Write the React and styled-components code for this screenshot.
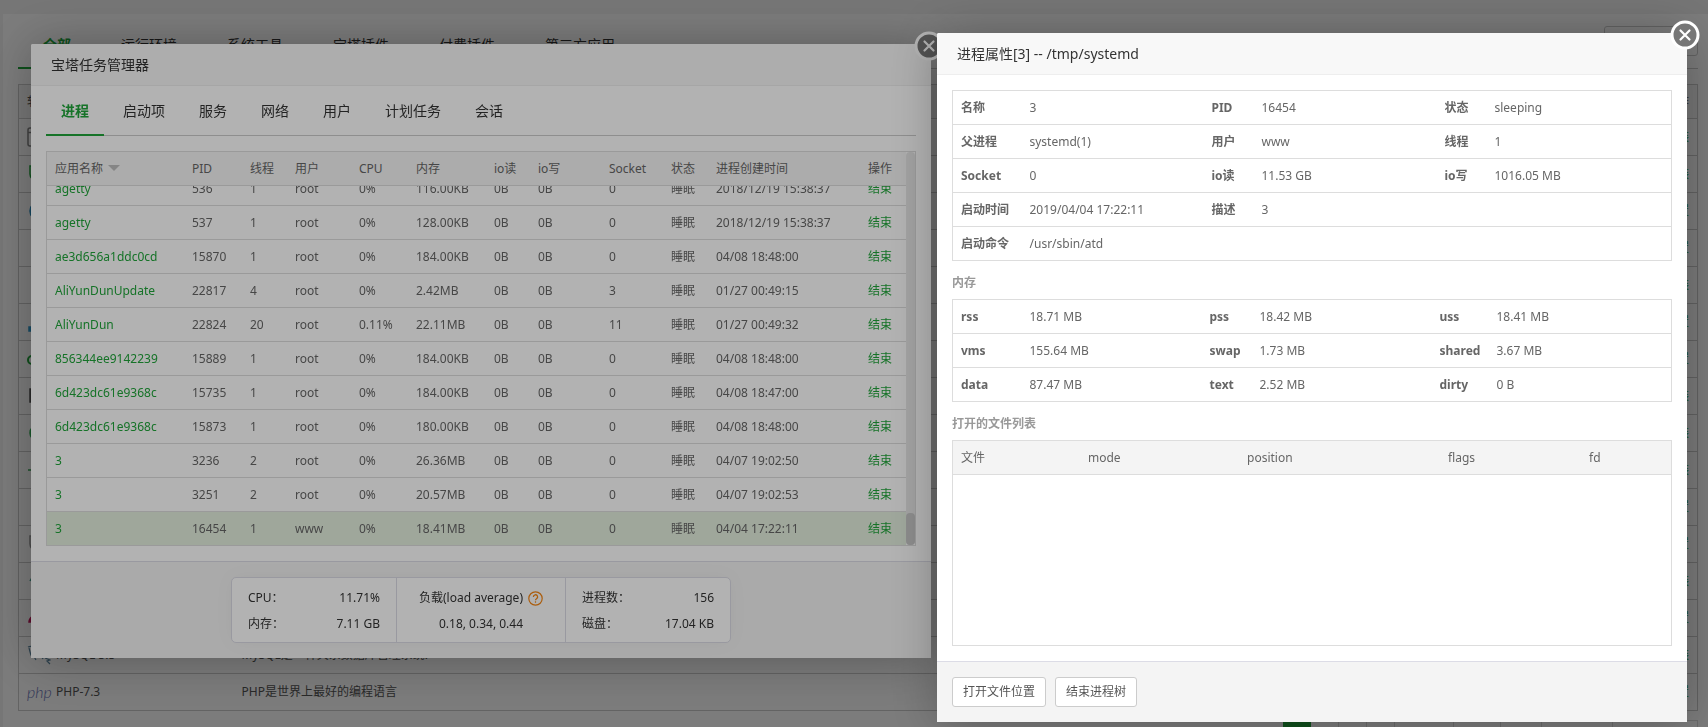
import React, { useLayoutEffect, useRef } from 'react';
import styled, { createGlobalStyle, css } from 'styled-components';

const GlobalStyle = createGlobalStyle`
  * {
    box-sizing: border-box;
  }
  html, body {
    margin: 0;
    height: 100%;
    overflow: hidden;
  }
  body {
    background: #f3f3f3;
    color: #666;
    font: 12px/20px "Noto Sans", "Noto Sans CJK SC", sans-serif;
  }
  a {
    color: #20a53a;
    text-decoration: none;
  }
  button {
    font: inherit;
  }
`;

/* ---------- software list behind the windows ---------- */

const Page = styled.main`
  padding: 14px 0 0 3px;
`;

const Panel = styled.section`
  background: #fff;
  padding: 8px 10px 15px 15px;
`;

const Toolbar = styled.div`
  display: flex;
  justify-content: space-between;
  align-items: flex-start;
  border-bottom: 1px solid #ccc;
`;

const Nav = styled.nav`
  display: flex;
  margin-bottom: -1px;
`;

const NavItem = styled.a`
  padding: 0 25px;
  font-size: 14px;
  line-height: 45px;
  color: ${({ $active }) => ($active ? '#20a53a' : '#333')};
  font-weight: ${({ $active }) => ($active ? 700 : 400)};
  border-bottom: 2px solid ${({ $active }) => ($active ? '#20a53a' : 'transparent')};
`;

const Button = styled.button`
  height: 30px;
  padding: 0 10px;
  border: 1px solid #ccc;
  border-radius: 3px;
  background: #fff;
  color: #555;
  cursor: pointer;
`;

const UpdateButton = styled(Button)`
  margin-top: 4px;
`;

const cellText = css`
  padding: 0 8px;
  text-align: left;
  white-space: nowrap;
`;

const SoftTable = styled.table`
  width: 100%;
  margin-top: 15px;
  border: 1px solid #ccc;
  border-collapse: collapse;
  table-layout: fixed;
  color: #555;
  th {
    ${cellText}
    height: 34px;
    background: #f6f6f6;
    font-weight: 400;
  }
  td {
    ${cellText}
    height: 37px;
    border-top: 1px solid #ccc;
  }
  th:last-child,
  td:last-child {
    text-align: right;
  }
`;

const SoftName = styled.span`
  display: flex;
  align-items: center;
  gap: 5px;
`;

const Pager = styled.div`
  display: flex;
  justify-content: flex-end;
  margin-top: 9px;
`;

const PageLink = styled.a`
  padding: 0 ${({ $wide }) => ($wide ? 11 : 10)}px;
  border: solid ${({ $current }) => ($current ? '#20a53a' : '#ddd')};
  border-width: 1px 1px 1px 0;
  line-height: 28px;
  background: ${({ $current }) => ($current ? '#20a53a' : '#fff')};
  color: ${({ $current }) => ($current ? '#fff' : '#333')};
`;

/* ---------- windows ---------- */

const Mask = styled.div`
  position: fixed;
  inset: 0;
  background: rgba(0, 0, 0, 0.3);
`;

const Window = styled.section`
  position: fixed;
  left: ${({ $left }) => $left}px;
  top: ${({ $top }) => $top}px;
  width: ${({ $width }) => $width}px;
  background: #fff;
  border-radius: 2px;
  box-shadow: 1px 1px 50px rgba(0, 0, 0, 0.3);
`;

const WindowTitle = styled.h2`
  margin: 0;
  padding: 0 20px;
  font-size: 14px;
  font-weight: 400;
  line-height: 41px;
  color: #333;
  background: #f8f8f8;
  border-bottom: 1px solid #eee;
  border-radius: 2px 2px 0 0;
`;

const CloseButton = styled.button`
  position: absolute;
  right: -13px;
  top: -13px;
  width: 30px;
  height: 30px;
  padding: 0;
  border: 0;
  background: none;
  cursor: pointer;
  svg {
    display: block;
  }
`;

const WindowBody = styled.div`
  padding: ${({ $flushTop }) => ($flushTop ? '0' : '15px')} 15px 15px;
`;

const WindowFooter = styled.footer`
  display: flex;
  justify-content: ${({ $center }) => ($center ? 'center' : 'flex-start')};
  gap: 9px;
  padding: 15px;
  background: #f4f4f4;
  border-top: 1px solid #dcdce6;
`;

const Tabs = styled.nav`
  display: flex;
  gap: 4px;
  margin-bottom: 15px;
  border-bottom: 1px solid #ccc;
`;

const Tab = styled.a`
  padding: 0 15px;
  margin-bottom: -1px;
  font-size: 14px;
  line-height: 50px;
  color: ${({ $active }) => ($active ? '#20a53a' : '#333')};
  font-weight: ${({ $active }) => ($active ? 700 : 400)};
  box-shadow: ${({ $active }) => ($active ? 'inset 0 -2px #20a53a' : 'none')};
`;

const ProcessFrame = styled.div`
  display: flex;
  border: 1px solid #ddd;
`;

const ProcessScroll = styled.div`
  flex: 1;
  height: 393px;
  overflow-y: scroll;
  scrollbar-width: none;
`;

const ScrollTrack = styled.div`
  display: flex;
  align-items: flex-end;
  width: 9px;
  background: #e8e8e8;
  border-radius: 4px;
`;

const ScrollThumb = styled.div`
  width: 100%;
  height: 32px;
  border-radius: 4px;
  background: #c8c8c8;
`;

const ProcessTable = styled.table`
  width: 100%;
  border-collapse: separate;
  border-spacing: 0;
  table-layout: fixed;
  th,
  td {
    ${cellText}
    height: 34px;
    border-bottom: 1px solid #ddd;
  }
  th {
    position: sticky;
    top: 0;
    background: #f6f6f6;
    font-weight: 400;
  }
  tr:last-child td {
    height: 33px;
    border-bottom: 0;
  }
`;

const ProcessRow = styled.tr`
  background: ${({ $selected }) => ($selected ? '#e4efdf' : '#fff')};
`;

const SortArrow = styled.span`
  display: inline-block;
  margin-left: 5px;
  vertical-align: 2px;
  border: 6px solid transparent;
  border-top-color: #bfbfbf;
  border-bottom: 0;
`;

const Stats = styled.div`
  display: flex;
  width: 500px;
  background: #fff;
  border: 1px solid #dcdce6;
  border-radius: 5px;
  box-shadow: 0 0 20px rgba(0, 0, 0, 0.04);
  color: #333;
`;

const StatCell = styled.div`
  flex: ${({ $wide }) => ($wide ? '0 0 169px' : '1')};
  padding: 7px 16px 5px;
  line-height: 26px;
  & + & {
    border-left: 1px solid #dcdce6;
  }
`;

const StatLine = styled.div`
  display: flex;
  align-items: center;
  justify-content: ${({ $center }) => ($center ? 'center' : 'space-between')};
  gap: 5px;
`;

const InfoTable = styled.table`
  width: 100%;
  border: 1px solid #ddd;
  border-collapse: collapse;
  table-layout: fixed;
  th,
  td {
    ${cellText}
    height: 34px;
    border-top: 1px solid #ddd;
  }
`;

const GroupTitle = styled.h3`
  margin: 14px 0 8px;
  font-size: 12px;
  line-height: 16px;
  font-weight: 700;
  color: #999;
`;

const FileFrame = styled.div`
  min-height: 206px;
  border: 1px solid #ddd;
`;

const FileTable = styled.table`
  width: 100%;
  border-collapse: separate;
  border-spacing: 0;
  table-layout: fixed;
  th {
    ${cellText}
    height: 34px;
    background: #f4f4f4;
    border-bottom: 1px solid #ddd;
    font-weight: 400;
  }
`;

const categories = ['全部', '运行环境', '系统工具', '宝塔插件', '付费插件', '第三方应用'];
const tabs = ['进程', '启动项', '服务', '网络', '用户', '计划任务', '会话'];

const softwares = [
  { icon: 'window', action: '安装' },
  { icon: 'shield', color: '#20a53a', action: '安装' },
  { icon: 'globe', color: '#2a8fc4', action: '设置' },
  { action: '设置' },
  { action: '安装' },
  { icon: 'base', color: '#2f9bd0', action: '设置' },
  { icon: 'ring', color: '#20a53a', action: '设置' },
  { icon: 'block', color: '#555', action: '安装' },
  { icon: 'dot', color: '#35b558', action: '安装' },
  { icon: 'pulse', color: '#35a553', action: '安装' },
  { action: '设置' },
  { icon: 'shield', color: '#999', action: '设置' },
  { icon: 'leaf', color: '#4ba695', action: '安装' },
  { icon: 'feather', color: '#c2185b', action: '设置' }
];

const pages = ['1', '2', '3', '4', '下一页', '尾页', '1/4', '从1-15条', '共60条数据'];

const processHeads = [
  ['应用名称', 137],
  ['PID', 58],
  ['线程', 45],
  ['用户', 64],
  ['CPU', 57],
  ['内存', 78],
  ['io读', 44],
  ['io写', 71],
  ['Socket', 62],
  ['状态', 45],
  ['进程创建时间', 152],
  ['操作', 46]
];

const processes = [
  ['agetty', '536', '1', 'root', '0%', '116.00KB', '0', '2018/12/19 15:38:37'],
  ['agetty', '537', '1', 'root', '0%', '128.00KB', '0', '2018/12/19 15:38:37'],
  ['ae3d656a1ddc0cd', '15870', '1', 'root', '0%', '184.00KB', '0', '04/08 18:48:00'],
  ['AliYunDunUpdate', '22817', '4', 'root', '0%', '2.42MB', '3', '01/27 00:49:15'],
  ['AliYunDun', '22824', '20', 'root', '0.11%', '22.11MB', '11', '01/27 00:49:32'],
  ['856344ee9142239', '15889', '1', 'root', '0%', '184.00KB', '0', '04/08 18:48:00'],
  ['6d423dc61e9368c', '15735', '1', 'root', '0%', '184.00KB', '0', '04/08 18:47:00'],
  ['6d423dc61e9368c', '15873', '1', 'root', '0%', '180.00KB', '0', '04/08 18:48:00'],
  ['3', '3236', '2', 'root', '0%', '26.36MB', '0', '04/07 19:02:50'],
  ['3', '3251', '2', 'root', '0%', '20.57MB', '0', '04/07 19:02:53'],
  ['3', '16454', '1', 'www', '0%', '18.41MB', '0', '04/04 17:22:11']
];

const detailRows = [
  ['名称', '3', 'PID', '16454', '状态', 'sleeping'],
  ['父进程', 'systemd(1)', '用户', 'www', '线程', '1'],
  ['Socket', '0', 'io读', '11.53 GB', 'io写', '1016.05 MB'],
  ['启动时间', '2019/04/04 17:22:11', '描述', '3'],
  ['启动命令', '/usr/sbin/atd']
];

const memoryRows = [
  ['rss', '18.71 MB', 'pss', '18.42 MB', 'uss', '18.41 MB'],
  ['vms', '155.64 MB', 'swap', '1.73 MB', 'shared', '3.67 MB'],
  ['data', '87.47 MB', 'text', '2.52 MB', 'dirty', '0 B']
];

const Columns = ({ widths }) => (
  <colgroup>
    {widths.map((width, i) => (
      <col key={i} width={width} />
    ))}
  </colgroup>
);

const CloseIcon = () => (
  <svg width="30" height="30" viewBox="0 0 30 30" fill="none" stroke="#fff">
    <circle cx="15" cy="15" r="13" fill="#777" strokeWidth="3" />
    <path d="M10.5 10.5l9 9M19.5 10.5l-9 9" strokeWidth="2.2" strokeLinecap="round" />
  </svg>
);

const HelpIcon = () => (
  <svg width="15" height="15" viewBox="0 0 15 15" fill="none" stroke="#f58512">
    <circle cx="7.5" cy="7.5" r="6.7" strokeWidth="1.2" />
    <path d="M5.4 5.9a2.1 2.1 0 1 1 3.1 1.8c-.7.4-1 .7-1 1.5" strokeWidth="1.3" />
    <circle cx="7.5" cy="11" r=".4" />
  </svg>
);

const DolphinIcon = () => (
  <svg width="24" height="20" viewBox="0 0 24 20" fill="none" stroke="#5d87a1" strokeWidth="1.2">
    <path d="M1 2c4-2 7 1 9 5 2 3 5 4 6 7M2 3c1 3 1 6 3 9l1-2 3 5M18 13l5 2-3 1 3 3" />
  </svg>
);

const PhpMark = styled.i`
  width: 24px;
  font: italic 300 16px/20px Lato, sans-serif;
  color: #6a72b5;
`;

const SoftIcon = ({ icon, color }) => (
  <svg width="24" height="20" viewBox="0 0 24 20" fill="none" stroke={color} strokeWidth="1.5">
    {icon === 'window' && (
      <g stroke="#888">
        <rect x="1" y="1" width="20" height="18" rx="2" />
        <path d="M1 5.5h20" />
      </g>
    )}
    {icon === 'shield' && <path d="M3 2h16v8c0 4-4 7-8 9-4-2-8-5-8-9z" />}
    {icon === 'globe' && <path d="M12 1a9 9 0 1 0 0 18 9 9 0 0 0 0-18M3 10h18M12 1v18" />}
    {icon === 'base' && <rect x="2" y="15" width="20" height="4" fill={color} />}
    {icon === 'ring' && <circle cx="5" cy="11" r="4" strokeWidth="2" />}
    {icon === 'block' && <rect x="3" y="3" width="16" height="13" fill={color} />}
    {icon === 'dot' && <circle cx="11" cy="10" r="8" fill={color} />}
    {icon === 'pulse' && <path d="M1 10h5l3-7 4 14 3-7h6" />}
    {icon === 'leaf' && <path d="M3 10c4-7 10-7 16-6-2 8-9 11-14 7" />}
    {icon === 'feather' && <path d="M2 14c0-5 8-11 18-12-2 7-8 12-17 12z" fill={color} />}
  </svg>
);

const InfoGrid = ({ rows, widths }) => (
  <InfoTable>
    <Columns widths={widths} />
    <tbody>
      {rows.map(row => (
        <tr key={row[0]}>
          {row.map((text, i) => {
            if (i % 2 === 0) {
              return (
                <th key={i} scope="row">
                  {text}
                </th>
              );
            }
            const last = i === row.length - 1;
            return (
              <td key={i} colSpan={last ? 7 - row.length : 1}>
                {text}
              </td>
            );
          })}
        </tr>
      ))}
    </tbody>
  </InfoTable>
);

const SoftwareList = () => (
  <Page>
    <Panel>
      <Toolbar>
        <Nav>
          {categories.map((name, i) => (
            <NavItem key={name} href="#" $active={i === 0}>
              {name}
            </NavItem>
          ))}
        </Nav>
        <UpdateButton type="button">更新软件列表</UpdateButton>
      </Toolbar>
      <SoftTable>
        <Columns widths={[215, 1000, undefined]} />
        <thead>
          <tr>
            <th>软件名称</th>
            <th>说明</th>
            <th>操作</th>
          </tr>
        </thead>
        <tbody>
          {softwares.map(({ icon, color, action }, i) => (
            <tr key={i}>
              <td>
                <SoftName>{icon && <SoftIcon icon={icon} color={color} />}</SoftName>
              </td>
              <td />
              <td>
                <a href="#">{action}</a>
              </td>
            </tr>
          ))}
          <tr>
            <td>
              <SoftName>
                <DolphinIcon />
                MySQL 5.5
              </SoftName>
            </td>
            <td>MySQL是一种关系数据库管理系统!</td>
            <td>
              <a href="#">安装</a>
            </td>
          </tr>
          <tr>
            <td>
              <SoftName>
                <PhpMark>php</PhpMark>
                PHP-7.3
              </SoftName>
            </td>
            <td>PHP是世界上最好的编程语言</td>
            <td>
              <a href="#">设置</a>
            </td>
          </tr>
        </tbody>
      </SoftTable>
      <Pager>
        {pages.map((text, i) => (
          <PageLink key={text} href="#" $current={i === 0} $wide={text.length > 1}>
            {text}
          </PageLink>
        ))}
      </Pager>
    </Panel>
  </Page>
);

const TaskManager = () => {
  const scrollRef = useRef(null);

  // the selected process is the last one
  useLayoutEffect(() => {
    scrollRef.current.scrollTop = scrollRef.current.scrollHeight;
  }, []);

  return (
    <Window $left={31} $top={44} $width={900}>
      <WindowTitle>宝塔任务管理器</WindowTitle>
      <CloseButton type="button" aria-label="关闭">
        <CloseIcon />
      </CloseButton>
      <WindowBody $flushTop>
        <Tabs>
          {tabs.map((name, i) => (
            <Tab key={name} href="#" $active={i === 0}>
              {name}
            </Tab>
          ))}
        </Tabs>
        <ProcessFrame>
          <ProcessScroll ref={scrollRef}>
            <ProcessTable>
              <Columns widths={processHeads.map(([, width]) => width)} />
              <thead>
                <tr>
                  {processHeads.map(([name], i) => (
                    <th key={name}>
                      {name}
                      {i === 0 && <SortArrow />}
                    </th>
                  ))}
                </tr>
              </thead>
              <tbody>
                {processes.map(([name, pid, threads, user, cpu, memory, socket, time], i) => (
                  <ProcessRow key={pid} $selected={i === processes.length - 1}>
                    <td>
                      <a href="#">{name}</a>
                    </td>
                    <td>{pid}</td>
                    <td>{threads}</td>
                    <td>{user}</td>
                    <td>{cpu}</td>
                    <td>{memory}</td>
                    <td>0B</td>
                    <td>0B</td>
                    <td>{socket}</td>
                    <td>睡眠</td>
                    <td>{time}</td>
                    <td>
                      <a href="#">结束</a>
                    </td>
                  </ProcessRow>
                ))}
              </tbody>
            </ProcessTable>
          </ProcessScroll>
          <ScrollTrack>
            <ScrollThumb />
          </ScrollTrack>
        </ProcessFrame>
      </WindowBody>
      <WindowFooter $center>
        <Stats>
          <StatCell>
            <StatLine>
              <span>CPU：</span>
              <span>11.71%</span>
            </StatLine>
            <StatLine>
              <span>内存：</span>
              <span>7.11 GB</span>
            </StatLine>
          </StatCell>
          <StatCell $wide>
            <StatLine $center>
              <span>负载(load average)</span>
              <HelpIcon />
            </StatLine>
            <StatLine $center>0.18, 0.34, 0.44</StatLine>
          </StatCell>
          <StatCell>
            <StatLine>
              <span>进程数：</span>
              <span>156</span>
            </StatLine>
            <StatLine>
              <span>磁盘：</span>
              <span>17.04 KB</span>
            </StatLine>
          </StatCell>
        </Stats>
      </WindowFooter>
    </Window>
  );
};

const ProcessDetail = () => (
  <Window $left={937} $top={33} $width={750}>
    <WindowTitle>进程属性[3] -- /tmp/systemd</WindowTitle>
    <CloseButton type="button" aria-label="关闭">
      <CloseIcon />
    </CloseButton>
    <WindowBody>
      <InfoGrid rows={detailRows} widths={[69, 182, 50, 183, 50, undefined]} />
      <GroupTitle>内存</GroupTitle>
      <InfoGrid rows={memoryRows} widths={[69, 180, 50, 180, 57, undefined]} />
      <GroupTitle>打开的文件列表</GroupTitle>
      <FileFrame>
        <FileTable>
          <Columns widths={[127, 159, 201, 141, undefined]} />
          <thead>
            <tr>
              <th>文件</th>
              <th>mode</th>
              <th>position</th>
              <th>flags</th>
              <th>fd</th>
            </tr>
          </thead>
        </FileTable>
      </FileFrame>
    </WindowBody>
    <WindowFooter>
      <Button type="button">打开文件位置</Button>
      <Button type="button">结束进程树</Button>
    </WindowFooter>
  </Window>
);

const App = () => (
  <>
    <GlobalStyle />
    <SoftwareList />
    <Mask />
    <TaskManager />
    <Mask />
    <ProcessDetail />
  </>
);

export default App;
